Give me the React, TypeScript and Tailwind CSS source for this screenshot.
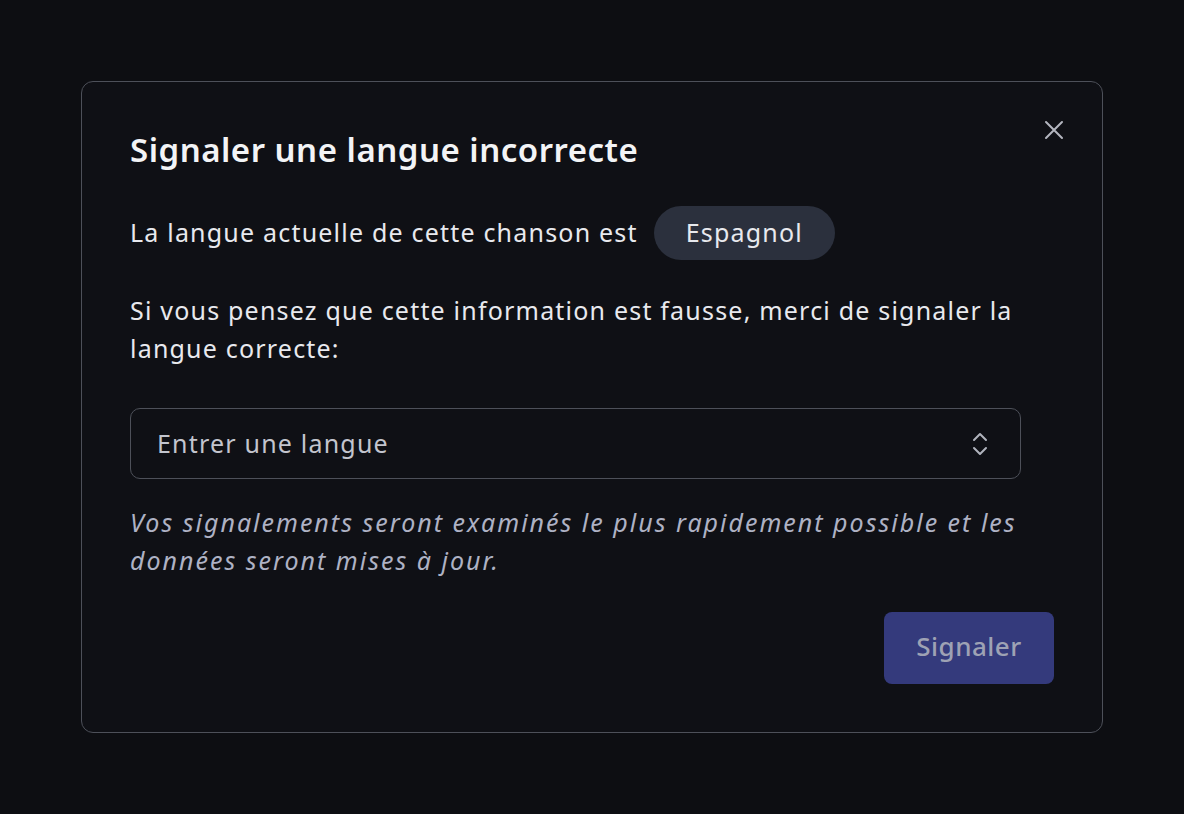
export default function App() {
  return (
    <div className="flex min-h-screen items-start justify-center bg-[#0d0e12] pt-[81px] font-['Noto_Sans',sans-serif]">
      <div className="relative w-[1022px] rounded-[12px] border-[1.5px] border-[#4d5059] bg-[#0f1015] px-[48px] pb-[48px] pt-[48px]">
        {/* Close button */}
        <button className="absolute right-[34px] top-[34px] p-1 text-[#b4b6bf]">
          <svg width="20" height="20" viewBox="0 0 20 20" fill="none" stroke="currentColor" strokeWidth="2" strokeLinecap="round">
            <path d="M2 2 L18 18 M18 2 L2 18" />
          </svg>
        </button>

        <div className="w-[891px]">
          <h2 className="text-[33px] font-semibold leading-[40px] tracking-[0.5px] text-[#f3f4f6]">
            Signaler une langue incorrecte
          </h2>

          <div className="mt-[36px] flex items-center gap-[16px] text-[25px] tracking-[1.2px] text-[#e8e9ee]">
            <span>La langue actuelle de cette chanson est</span>
            <span className="flex h-[54px] items-center rounded-full bg-[#2b303d] px-[32px]">Espagnol</span>
          </div>

          <p className="mt-[31px] text-[25px] leading-[38px] tracking-[1.2px] text-[#e8e9ee]">
            Si vous pensez que cette information est fausse, merci de signaler la langue correcte:
          </p>

          <div className="mt-[41px] flex h-[71px] items-center justify-between rounded-[10px] border-[1.5px] border-[#4d5059] pl-[26px] pr-[32px]">
            <span className="text-[25px] tracking-[1.2px] text-[#c3c5ce]">Entrer une langue</span>
            <svg width="16" height="26" viewBox="0 0 16 26" fill="none" stroke="#b0b3bd" strokeWidth="2" strokeLinecap="round" strokeLinejoin="round">
              <path d="M2 9 L8 3 L14 9" />
              <path d="M2 17 L8 23 L14 17" />
            </svg>
          </div>

          <p className="mt-[24px] text-[25px] italic leading-[38px] tracking-[2px] text-[#aeb2c4]">
            Vos signalements seront examinés le plus rapidement possible et les données seront mises à jour.
          </p>
        </div>

        <div className="mt-[33px] flex justify-end">
          <button className="h-[72px] w-[170px] rounded-[8px] bg-[#343a7c] pb-[4px] text-[26px] font-medium tracking-[0.5px] text-[#9ea2b4]">
            Signaler
          </button>
        </div>
      </div>
    </div>
  );
}
